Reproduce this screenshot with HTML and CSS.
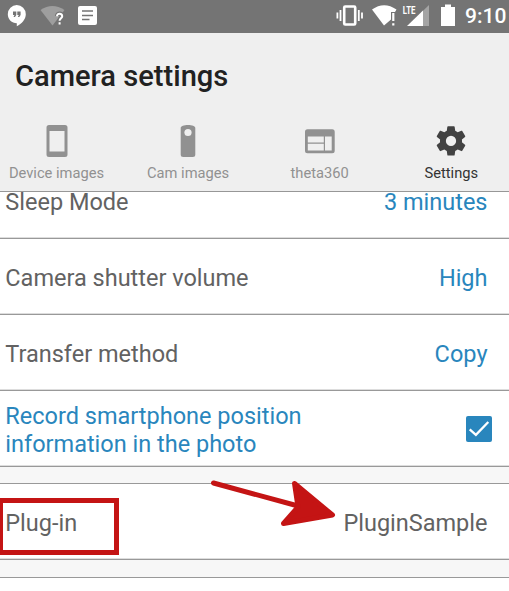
FILE: index.html
```
<!DOCTYPE html>
<html lang="en">
<head>
<meta charset="utf-8">
<title>Camera settings</title>
<link rel="stylesheet" href="styles.css">
</head>
<body>
<div class="screen">
  <div class="status">
    <svg class="status-left" width="110" height="33" viewBox="0 0 110 33">
      <path fill="#fff" d="M16.800 5a9.200 9.200 0 0 0-9 9.200c0 5 4 9 9 9V26.200c5-2.500 9-7 9-12A9.200 9.200 0 0 0 16.800 5z"/>
      <path fill="#747474" d="M13 11.500h3.300v3.500l-1.300 2h-1.500l1-2H13zM17.300 11.500h3.300v3.500l-1.300 2h-1.500l1-2h-1.500z"/>
      <path fill="#9e9e9e" d="M40.500 10q11.800-8 24 0L52.500 25.500z"/>
      <path fill="none" stroke="#747474" stroke-width="4.500" d="M57.200 16c0-3 5-3 5 0 0 2-2.600 2-2.600 4.500v4"/>
      <path fill="none" stroke="#fff" stroke-width="2" d="M57 16.200c0-3.600 5.200-3.200 5.200 0 0 2-2.600 2.200-2.600 4.600M59.600 22.300v2.200"/>
      <rect x="78" y="6" width="19" height="19" rx="2" fill="#fff"/>
      <path stroke="#747474" stroke-width="1.500" d="M82 11h11M82 15.500h11M82 19.600h7.500"/>
    </svg>
    <svg class="status-right" width="124" height="33" viewBox="336 0 124 33">
      <rect x="344.200" y="6.500" width="11" height="18" rx="1" fill="none" stroke="#fff" stroke-width="2.600"/>
      <path stroke="#fff" stroke-width="1.800" d="M340.500 10v11M337.400 12.500v6M358.800 10v11M362 12.500v6"/>
      <path fill="#fff" d="M372 9.500q12-8.500 24.500 0L395 12h-4v7.500L384 25.500z"/>
      <path stroke="#fff" stroke-width="2.200" d="M393.300 13v8M393.300 23.200v2.400"/>
      <path fill="#a4a4a4" d="M429 5v21h-8V12.800z"/>
      <path fill="#fff" d="M423 10.500V26h-16z"/>
      <text class="lte" transform="translate(402.800 14.200) scale(.68 1)">LTE</text>
      <path fill="#fff" d="M445 4.500h6V7h4v19h-14V7h4z"/>
    </svg>
    <span class="clock">9:10</span>
  </div>
  <h1 class="title">Camera settings</h1>
  <nav class="tabs">
    <div class="tab">
      <svg width="32" height="34" viewBox="0 0 32 34"><path fill="#919191" fill-rule="evenodd" d="M8 1h16a2.500 2.500 0 0 1 2.500 2.500v27A2.500 2.500 0 0 1 24 33H8a2.500 2.500 0 0 1-2.500-2.500v-27A2.500 2.500 0 0 1 8 1zM8.500 7v20.500h15V7z"/></svg>
      <span>Device images</span>
    </div>
    <div class="tab">
      <svg width="32" height="34" viewBox="0 0 32 34"><path fill="#919191" d="M8.700 4C8.700 2 12 1 16 1s7.300 1 7.300 3v26.500a2.500 2.500 0 0 1-2.500 2.500h-9.600a2.500 2.500 0 0 1-2.500-2.500z"/><circle cx="16" cy="8.500" r="3.600" fill="#efefef"/></svg>
      <span>Cam images</span>
    </div>
    <div class="tab">
      <svg width="32" height="34" viewBox="0 0 32 34"><path fill="#919191" fill-rule="evenodd" d="M3.500 5.200h24.700a2.500 2.500 0 0 1 2.500 2.500v19a2.500 2.500 0 0 1-2.500 2.500H3.500A2.500 2.500 0 0 1 1 26.700v-19a2.500 2.500 0 0 1 2.500-2.500zM3.800 12.500v6h16v-6zM3.800 19.700v6.700h16v-6.700zM21 12.500v13.900h6.700V12.500z"/></svg>
      <span>theta360</span>
    </div>
    <div class="tab active">
      <svg width="32" height="34" viewBox="1.100 .5 21.800 23.160"><path fill="#424242" d="M19.430 12.980c.04-.32.070-.64.070-.98s-.03-.66-.07-.98l2.110-1.650c.19-.15.24-.42.12-.64l-2-3.460c-.12-.22-.39-.3-.61-.22l-2.490 1c-.52-.4-1.080-.73-1.690-.98l-.38-2.650C14.460 2.180 14.250 2 14 2h-4c-.25 0-.46.180-.49.420l-.38 2.650c-.61.250-1.170.590-1.690.980l-2.490-1c-.23-.09-.49 0-.61.220l-2 3.460c-.13.220-.07.490.120.640l2.110 1.650c-.04.320-.07.650-.07.980s.030.660.070.980l-2.110 1.650c-.19.150-.24.420-.12.640l2 3.460c.12.220.39.300.61.220l2.490-1c.52.400 1.080.730 1.690.980l.38 2.650c.03.240.24.420.49.420h4c.25 0 .46-.18.49-.42l.38-2.650c.61-.25 1.170-.59 1.690-.98l2.490 1c.23.090.49 0 .61-.22l2-3.460c.12-.22.07-.49-.12-.64l-2.110-1.650zM12 15.500a3.500 3.500 0 1 1 0-7 3.500 3.500 0 0 1 0 7z"/></svg>
      <span>Settings</span>
    </div>
  </nav>
  <main class="list">
    <div class="row first"><span>Sleep Mode</span><span class="value">3 minutes</span></div>
    <div class="row"><span>Camera shutter volume</span><span class="value">High</span></div>
    <div class="row"><span>Transfer method</span><span class="value">Copy</span></div>
    <div class="row record"><span>Record smartphone position<br>information in the photo</span>
      <svg class="check" width="26" height="26" viewBox="0 0 26 26"><rect width="26" height="26" rx="2" fill="#2986bd"/><path d="M3.700 13.300l6.200 5.500L22.300 6" fill="none" stroke="#fff" stroke-width="2.300"/></svg>
    </div>
    <div class="gap"></div>
    <div class="row plugin"><span>Plug-in</span><span>PluginSample</span></div>
    <div class="gap last"></div>
  </main>
  <svg class="marks" width="509" height="591" viewBox="0 0 509 591">
    <rect x="0.500" y="500.500" width="116" height="52" fill="none" stroke="#c41414" stroke-width="5"/>
    <path d="M213.500 483L300 506.500" stroke="#c41414" stroke-width="5" stroke-linecap="round"/>
    <path d="M294.500 483.500L332.500 515L283.500 523.500L298 507z" fill="#c41414" stroke="#c41414" stroke-width="5" stroke-linejoin="round"/>
  </svg>
</div>
</body>
</html>
```
FILE: styles.css
```
* { box-sizing: border-box; }
body { margin: 0; background: #fff; font-family: Roboto, sans-serif; }
.screen { position: relative; width: 509px; height: 591px; overflow: hidden; }
.status {
  display: flex;
  height: 33px;
  background: #747474;
  color: #fff;
}
.status svg { flex: none; }
.status-right { margin-left: 226px; }
.clock { margin-left: 5px; font-size: 21px; line-height: 33px; font-weight: 500; }
.lte { font: bold 11.500px Roboto, sans-serif; fill: #fff; }
.title {
  margin: 0;
  height: 87px;
  padding-left: 15px;
  background: #efefef;
  color: #212121;
  font-size: 29.100px;
  font-weight: 500;
  line-height: 86px;
  white-space: nowrap;
}
.tabs {
  display: grid;
  grid-template-columns: repeat(4, 131.600px);
  height: 72px;
  padding-top: 4px;
  background: #efefef;
  border-bottom: 1px solid #979797;
}
.tab {
  display: flex;
  flex-direction: column;
  align-items: center;
  margin-left: -18.600px;
  color: #919191;
  font-size: 14.700px;
  line-height: 18px;
  gap: 6px;
}
.tab.active { color: #333; }
.list { color: #626262; font-size: 23.500px; }
.row {
  display: flex;
  align-items: center;
  justify-content: space-between;
  height: 76px;
  padding: 3px 21.500px 0 5.300px;
  border-bottom: 1px solid #999;
  box-shadow: inset 0 -1px #ddd;
  line-height: 28px;
  white-space: nowrap;
}
.first { height: 47px; padding-bottom: 29px; }
.value, .record { color: #2986bd; }
.record { padding-right: 17px; }
.check { margin-top: -2px; }
.gap { height: 17px; background: #f7f7f7; border-bottom: 1px solid #999; }
.gap.last { height: 18px; }
.marks { position: absolute; left: 0; top: 0; }
```
